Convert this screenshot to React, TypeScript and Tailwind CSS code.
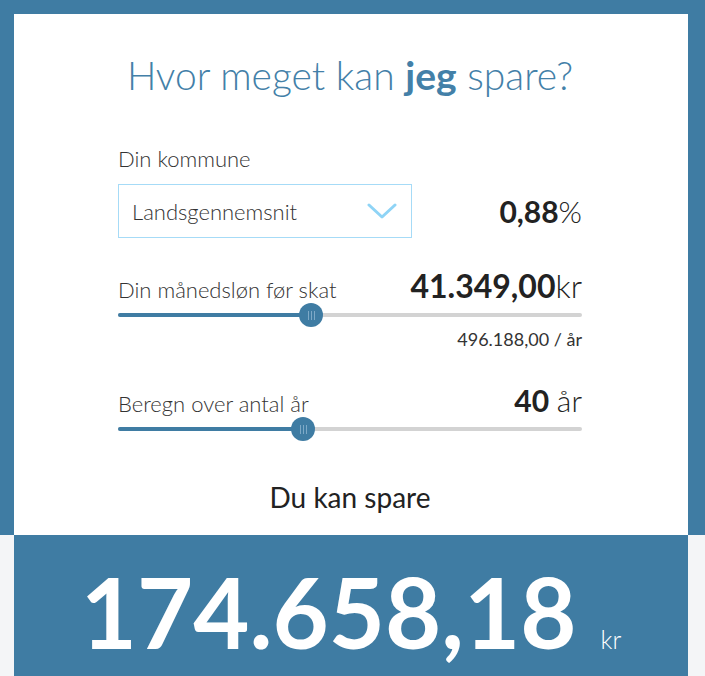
import React from 'react'

const font = { fontFamily: 'Lato, "Open Sans", sans-serif' }

function Slider({ pct }: { pct: number }) {
  return (
    <div className="relative h-[22px] w-full">
      <div className="absolute left-0 right-0 top-[9px] h-[4px] rounded-full bg-[#d3d3d3]" />
      <div
        className="absolute left-0 top-[9px] h-[4px] rounded-full bg-[#3f7ca3]"
        style={{ width: `${pct}%` }}
      />
      <div
        className="absolute -top-px flex h-[24px] w-[24px] -translate-x-1/2 items-center justify-center gap-[2px] rounded-full bg-[#3f7ca3]"
        style={{ left: `${pct}%` }}
      >
        <span className="h-[9px] w-px bg-[#7ea9c7]" />
        <span className="h-[9px] w-px bg-[#7ea9c7]" />
        <span className="h-[9px] w-px bg-[#7ea9c7]" />
      </div>
    </div>
  )
}

export default function App() {
  return (
    <div style={font} className="min-h-screen bg-[#f4f5f7]">
      {/* Calculator card on blue */}
      <div className="bg-[#3f7ca3] pl-[14px] pr-[17px] pt-[14px]">
        <div className="bg-white pb-[21px] pl-[104px] pr-[106px] pt-[38px]">
          <h1 className="text-center text-[39px] font-light leading-[46px] text-[#4380a8]">
            Hvor meget kan <span className="font-bold">jeg</span> spare?
          </h1>

          <p className="mt-[47px] text-[22px] font-light leading-[28px] text-[#333]">Din kommune</p>
          <div className="mt-[11px] flex items-center justify-between">
            <div className="flex h-[54px] w-[294px] items-center justify-between border border-[#a6dbf7] pl-[13px] pr-[14px]">
              <span className="text-[22px] font-light text-[#333]">Landsgennemsnit</span>
              <svg width="30" height="16" viewBox="0 0 30 16" fill="none">
                <polyline
                  points="2,2 15,14 28,2"
                  stroke="#8fd4f6"
                  strokeWidth="3"
                  strokeLinecap="round"
                  strokeLinejoin="round"
                />
              </svg>
            </div>
            <p className="text-[30px] leading-[36px] text-[#222]">
              <span className="font-bold">0,88</span>
              <span className="font-light">%</span>
            </p>
          </div>

          <div className="mt-[30px] flex items-baseline justify-between">
            <span className="text-[22px] font-light leading-[28px] text-[#333]">Din månedsløn før skat</span>
            <span className="text-[32px] leading-[36px] text-[#222]">
              <span className="font-bold">41.349,00</span>
              <span className="font-light">kr</span>
            </span>
          </div>
          <Slider pct={41.6} />
          <p className="mt-[2px] text-right text-[18px] leading-[22px] text-[#333]">496.188,00 / år</p>

          <div className="mt-[32px] flex items-baseline justify-between">
            <span className="text-[22px] font-light leading-[28px] text-[#333]">Beregn over antal år</span>
            <span className="text-[30px] leading-[36px] text-[#222]">
              <span className="font-bold">40</span> <span className="font-light">år</span>
            </span>
          </div>
          <Slider pct={39.9} />

          <p className="mt-[40px] text-center text-[28px] leading-[34px] text-[#222]">Du kan spare</p>
        </div>
      </div>

      {/* Result */}
      <div className="pl-[14px] pr-[17px]">
        <div className="flex items-baseline justify-center gap-[24px] bg-[#3f7ca3] pb-[28px] pt-[28px] text-white">
          <span className="text-[97px] font-bold leading-none">174.658,18</span>
          <span className="text-[25px] font-light">kr</span>
        </div>
      </div>
    </div>
  )
}
